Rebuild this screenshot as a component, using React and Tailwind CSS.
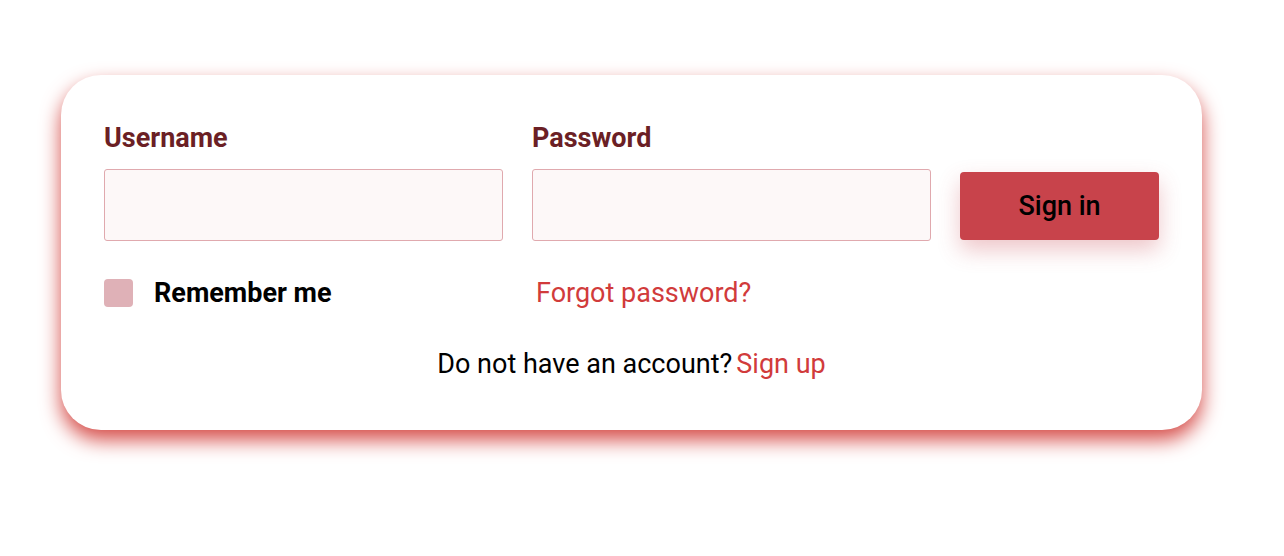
export default function App() {
  return (
    <div
      className="w-[1284px] h-[556px] bg-white pt-[75px] pl-[61px]"
      style={{ fontFamily: "Roboto, 'Liberation Sans', sans-serif" }}
    >
      <div className="w-[1141px] h-[355px] bg-white rounded-[40px] shadow-[0_10px_20px_rgba(214,78,74,1)] px-[43px] pt-[47px]">
        <div className="flex items-end gap-[29px]">
          <div className="flex flex-col w-[399px]">
            <label className="text-[27px] font-bold text-[#6b1f25] leading-[32px] mb-[15px]">Username</label>
            <input className="h-[72px] border border-[#e0a9ae] bg-[#fdf8f8] rounded-[3px] outline-none" />
          </div>
          <div className="flex flex-col w-[399px]">
            <label className="text-[27px] font-bold text-[#6b1f25] leading-[32px] mb-[15px]">Password</label>
            <input type="password" className="h-[72px] border border-[#e0a9ae] bg-[#fdf8f8] rounded-[3px] outline-none" />
          </div>
          <button className="w-[199px] h-[68px] mb-[1px] bg-[#c8434b] rounded-[4px] text-[27px] font-medium text-black shadow-[0_10px_22px_rgba(200,67,75,0.3)]">
            Sign in
          </button>
        </div>
        <div className="flex items-center mt-[37px] h-[30px]">
          <div className="flex items-center w-[428px]">
            <div className="w-[29px] h-[28px] rounded-[4px] bg-[#dfb1b7]"></div>
            <span className="ml-[21px] text-[27px] font-bold text-black">Remember me</span>
          </div>
          <a className="ml-[4px] text-[27px] text-[#d13b3b]">Forgot password?</a>
        </div>
        <div className="flex justify-center mt-[36px] text-[27px]">
          <span className="text-black">Do not have an account?</span>
          <a className="ml-[4px] text-[#d13b3b]">Sign up</a>
        </div>
      </div>
    </div>
  );
}
